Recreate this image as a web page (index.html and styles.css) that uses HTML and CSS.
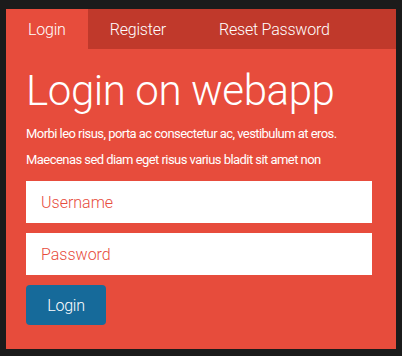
FILE: index.html
```html
<!DOCTYPE html>
<html lang="en">
<head>
<meta charset="UTF-8">
<meta name="viewport" content="width=device-width, initial-scale=1.0">
<title>Login - webapp</title>
<link rel="stylesheet" href="styles.css">
</head>
<body>
<div class="panel">
<nav class="tabs">
<a href="#" class="tab active">Login</a>
<a href="#" class="tab">Register</a>
<a href="#" class="tab tab-wide">Reset Password</a>
</nav>
<div class="content">
<h1>Login on webapp</h1>
<p>Morbi leo risus, porta ac consectetur ac, vestibulum at eros.</p>
<p>Maecenas sed diam eget risus varius bladit sit amet non</p>
<form class="login-form">
<input type="text" placeholder="Username">
<input type="password" placeholder="Password">
<button type="submit">Login</button>
</form>
</div>
</div>
</body>
</html>
```

FILE: styles.css
```css
body{margin:0;padding:9px 6px 7px;background:#1b1b1b;font-family:'Roboto',sans-serif;color:#fff;}
.panel{background:#e74c3c;height:340px;}
.tabs{display:flex;background:#c0392b;height:40px;}
.tab{display:flex;align-items:center;padding:0 22px;color:#fff;text-decoration:none;font-size:16px;font-weight:300;letter-spacing:-0.2px;}
.tab.active{background:#e74c3c;}
.tab-wide{margin-left:9px;}
.content{padding:0 24px 0 20px;}
h1{margin:16px 0 0;font-size:42px;font-weight:300;line-height:52px;letter-spacing:-0.4px;}
p{margin:8px 0 0;font-size:13px;line-height:18px;letter-spacing:-0.55px;}
.login-form{display:flex;flex-direction:column;align-items:flex-start;gap:10px;margin-top:12px;}
input{box-sizing:border-box;width:100%;height:42px;border:none;padding:0 15px;font-family:'Roboto',sans-serif;font-size:16px;font-weight:300;color:#333;}
input::placeholder{color:#e74c3c;opacity:1;}
button{width:80px;height:40px;border:none;border-radius:4px;background:#166a9a;color:#fff;font-family:'Roboto',sans-serif;font-size:16px;font-weight:300;letter-spacing:-0.2px;cursor:pointer;}
```
